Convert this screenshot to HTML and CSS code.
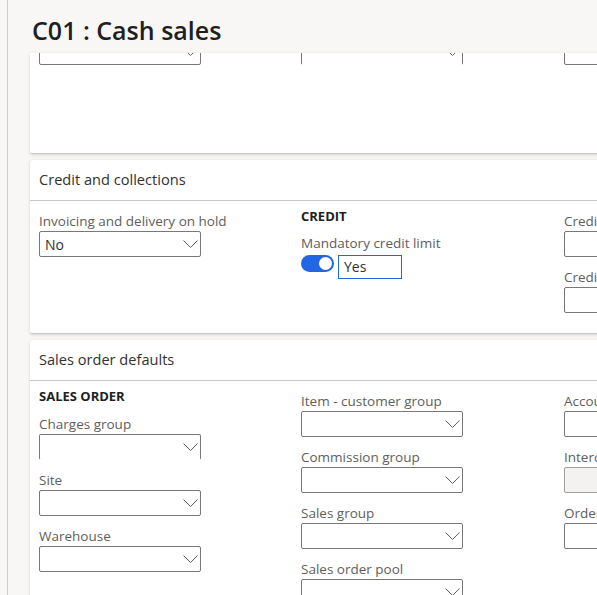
FILE: index.html
```html
<!DOCTYPE html>
<html>
<head>
<meta charset="utf-8">
<link rel="stylesheet" href="styles.css">
</head>
<body>
<div class="page">
  <div class="rail"></div>
  <div class="main">
    <header class="titlebar"><h1 class="title">C01 : Cash sales</h1></header>

    <section class="card card-top">
      <div class="grid grid-top">
        <div class="col">
          <div class="input dd"><span></span><svg class="chev" width="15" height="8" viewBox="0 0 15 8"><polyline points="0.5,0.5 7.5,7.5 14.5,0.5"/></svg></div>
        </div>
        <div class="col">
          <div class="input dd nobottom"><span></span><svg class="chev" width="15" height="8" viewBox="0 0 15 8"><polyline points="0.5,0.5 7.5,7.5 14.5,0.5"/></svg></div>
        </div>
        <div class="col">
          <div class="input"></div>
        </div>
      </div>
    </section>

    <section class="card">
      <div class="card-head">Credit and collections</div>
      <div class="grid">
        <div class="col">
          <div class="field">
            <div class="label">Invoicing and delivery on hold</div>
            <div class="input dd"><span class="val">No</span><svg class="chev" width="15" height="8" viewBox="0 0 15 8"><polyline points="0.5,0.5 7.5,7.5 14.5,0.5"/></svg></div>
          </div>
        </div>
        <div class="col">
          <div class="group-title">CREDIT</div>
          <div class="field">
            <div class="label">Mandatory credit limit</div>
            <div class="toggle-row">
              <span class="toggle"><span class="knob"></span></span>
              <span class="toggle-val">Yes</span>
            </div>
          </div>
        </div>
        <div class="col">
          <div class="field">
            <div class="label">Credit limit</div>
            <div class="input"></div>
          </div>
          <div class="field">
            <div class="label">Credit rating</div>
            <div class="input"></div>
          </div>
        </div>
      </div>
    </section>

    <section class="card card-last">
      <div class="card-head">Sales order defaults</div>
      <div class="grid">
        <div class="col">
          <div class="group-title">SALES ORDER</div>
          <div class="field">
            <div class="label">Charges group</div>
            <div class="input dd nobottom"><span></span><svg class="chev" width="15" height="8" viewBox="0 0 15 8"><polyline points="0.5,0.5 7.5,7.5 14.5,0.5"/></svg></div>
          </div>
          <div class="field">
            <div class="label">Site</div>
            <div class="input dd"><span></span><svg class="chev" width="15" height="8" viewBox="0 0 15 8"><polyline points="0.5,0.5 7.5,7.5 14.5,0.5"/></svg></div>
          </div>
          <div class="field">
            <div class="label">Warehouse</div>
            <div class="input dd"><span></span><svg class="chev" width="15" height="8" viewBox="0 0 15 8"><polyline points="0.5,0.5 7.5,7.5 14.5,0.5"/></svg></div>
          </div>
        </div>
        <div class="col">
          <div class="field">
            <div class="label">Item - customer group</div>
            <div class="input dd"><span></span><svg class="chev" width="15" height="8" viewBox="0 0 15 8"><polyline points="0.5,0.5 7.5,7.5 14.5,0.5"/></svg></div>
          </div>
          <div class="field">
            <div class="label">Commission group</div>
            <div class="input dd"><span></span><svg class="chev" width="15" height="8" viewBox="0 0 15 8"><polyline points="0.5,0.5 7.5,7.5 14.5,0.5"/></svg></div>
          </div>
          <div class="field">
            <div class="label">Sales group</div>
            <div class="input dd"><span></span><svg class="chev" width="15" height="8" viewBox="0 0 15 8"><polyline points="0.5,0.5 7.5,7.5 14.5,0.5"/></svg></div>
          </div>
          <div class="field">
            <div class="label">Sales order pool</div>
            <div class="input dd"><span></span><svg class="chev" width="15" height="8" viewBox="0 0 15 8"><polyline points="0.5,0.5 7.5,7.5 14.5,0.5"/></svg></div>
          </div>
        </div>
        <div class="col">
          <div class="field">
            <div class="label">Account statement</div>
            <div class="input"></div>
          </div>
          <div class="field">
            <div class="label">Intercompany</div>
            <div class="input disabled"></div>
          </div>
          <div class="field">
            <div class="label">Order entry deadline group</div>
            <div class="input"></div>
          </div>
        </div>
      </div>
    </section>
  </div>
</div>
</body>
</html>
```

FILE: styles.css
```css
* { box-sizing: border-box; }
html, body {
  margin: 0;
  padding: 0;
  height: 595px;
  overflow: hidden;
  background: #faf9f8;
  font-family: "Open Sans", "Noto Sans", sans-serif;
  color: #323130;
}
.page {
  display: flex;
  height: 595px;
}
.rail {
  width: 8px;
  flex: none;
  background: #f7f7f7;
  border-right: 1px solid #cfcdcb;
}
.main {
  flex: none;
  width: 900px;
  padding-left: 22px;
  background: #f8f7f6;
}
.titlebar {
  height: 53px;
  padding: 6px 0 0 2px;
  display: flex;
  align-items: center;
}
.title {
  margin: 0;
  font-size: 25px;
  font-weight: 600;
  letter-spacing: 0;
  color: #201f1e;
}
.card {
  background: #fff;
  border-radius: 2px;
  box-shadow: 0 1.6px 3.6px rgba(0,0,0,0.13), 0 0.3px 0.9px rgba(0,0,0,0.11);
  margin-bottom: 7px;
  padding-bottom: 15px;
}
.card-top {
  height: 100px;
  overflow: hidden;
  border-radius: 0 0 2px 2px;
  padding-bottom: 0;
}
.grid-top { margin-top: -14px; padding-top: 0 !important; }
.card-head {
  height: 41px;
  padding: 0 9px 2px;
  display: flex;
  align-items: center;
  font-size: 14.6px;
  border-bottom: 1px solid #c8c6c4;
}
.grid {
  display: grid;
  grid-template-columns: 262px 263px 263px;
  padding: 5px 0 0 9px;
}
.group-title {
  font-size: 13px;
  font-weight: 700;
  line-height: 20px;
  color: #201f1e;
  margin-bottom: 2px;
}
.col .group-title + .field .label { }
.card-last .group-title { margin-bottom: 3px; }
.field {
  padding: 5px 0;
}
.label {
  font-size: 13.5px;
  line-height: 20px;
  color: #605e5c;
  white-space: nowrap;
}
.input {
  width: 162px;
  height: 26px;
  border: 1px solid #7a7876;
  border-radius: 2px;
  background: #fff;
}
.input.nobottom { border-bottom-color: transparent; }
.input.disabled { background: #f3f2f1; border-color: #a19f9d; }
.dd {
  display: flex;
  align-items: center;
  justify-content: space-between;
  padding: 0 2px 0 5px;
}
.val { font-size: 14px; color: #323130; }
.chev { display: block; }
.chev polyline { fill: none; stroke: #605e5c; stroke-width: 1; }
.toggle-row {
  display: flex;
  align-items: flex-start;
  gap: 4px;
  padding-top: 2px;
}
.toggle {
  width: 33px;
  height: 17px;
  border-radius: 9px;
  background: #2266e3;
  display: flex;
  align-items: center;
  justify-content: flex-end;
  padding-right: 2px;
}
.knob {
  width: 13px;
  height: 13px;
  border-radius: 50%;
  background: #fff;
}
.toggle-val {
  width: 64px;
  height: 24px;
  border: 1px solid #2266e3;
  font-size: 14px;
  line-height: 22px;
  padding-left: 5px;
  color: #323130;
}
```
